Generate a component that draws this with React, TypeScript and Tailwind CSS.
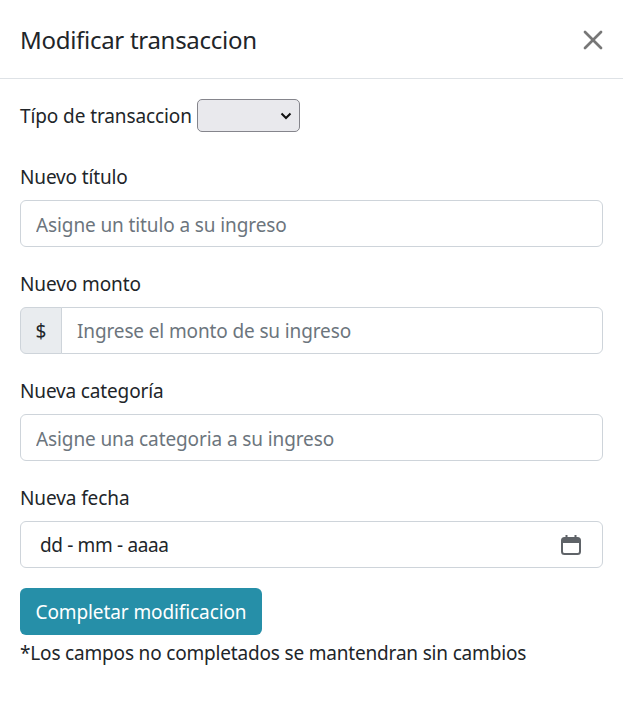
import { X } from "lucide-react";

const fontStack = "font-['Noto_Sans','Open_Sans',sans-serif]";

function Field({ label, placeholder }: { label: string; placeholder: string }) {
  return (
    <div className="mb-[22px]">
      <label className="mb-2 block h-[30px] text-[19px] leading-[30px] tracking-[-0.15px]">{label}</label>
      <input
        placeholder={placeholder}
        className="h-[47px] w-full rounded-[6px] border border-[#ced4da] bg-white px-[15px] pt-[2px] text-[19px] tracking-[-0.11px] outline-none placeholder:text-[#6c757d]"
      />
    </div>
  );
}

function CalendarIcon() {
  return (
    <svg width="20" height="20" viewBox="0 0 20 20" fill="none" stroke="#5f6368" strokeWidth="2">
      <rect x="1" y="3" width="18" height="16" rx="2.5" />
      <path d="M1 6h18" strokeWidth="4" />
      <path d="M5.5 0v3M14.5 0v3" />
    </svg>
  );
}

export default function App() {
  return (
    <div className={`min-h-[705px] w-full bg-white text-[#212529] ${fontStack}`}>
      <div className="flex h-[79px] items-center justify-between border-b border-[#dee2e6] pr-[14px] pl-5">
        <h5 className="pt-[2px] text-[24px] leading-none tracking-[-0.29px]">Modificar transaccion</h5>
        <X size={32} strokeWidth={2} className="mt-[2px] text-[#777777]" />
      </div>

      <div className="px-5 pt-5">
        <div className="mb-[30px] flex h-[33px] items-center gap-[5px]">
          <span className="pt-[2px] text-[19px] tracking-[-0.1px]">Típo de transaccion</span>
          <div className="flex h-[33px] w-[103px] items-center justify-end rounded-[5px] border border-[#85858c] bg-[#e9e9ed] pr-[7px]">
            <svg width="12" height="8" viewBox="0 0 12 8" fill="none" stroke="#111" strokeWidth="2">
              <path d="M1.5 1.5 6 6l4.5-4.5" />
            </svg>
          </div>
        </div>

        <Field label="Nuevo título" placeholder="Asigne un titulo a su ingreso" />

        <div className="mb-[22px]">
          <label className="mb-2 block h-[30px] text-[19px] leading-[30px] tracking-[-0.1px]">Nuevo monto</label>
          <div className="flex h-[47px] w-full">
            <span className="flex w-[42px] items-center justify-center rounded-l-[6px] border border-[#ced4da] bg-[#e9ecef] pt-[2px] text-[19px]">
              $
            </span>
            <input
              placeholder="Ingrese el monto de su ingreso"
              className="-ml-px min-w-0 flex-1 rounded-r-[6px] border border-[#ced4da] bg-white px-[15px] pt-[2px] text-[19px] tracking-[-0.13px] outline-none placeholder:text-[#6c757d]"
            />
          </div>
        </div>

        <Field label="Nueva categoría" placeholder="Asigne una categoria a su ingreso" />

        <div className="mb-5">
          <label className="mb-2 block h-[30px] text-[19px] leading-[30px] tracking-[-0.1px]">Nueva fecha</label>
          <div className="flex h-[47px] w-full items-center justify-between rounded-[6px] border border-[#ced4da] bg-white pr-[21px] pl-[19px]">
            <span className="pt-[2px] text-[19px] tracking-[-0.35px]">dd - mm - aaaa</span>
            <CalendarIcon />
          </div>
        </div>

        <button className="h-[47px] w-[242px] rounded-[6px] bg-[#268fa8] pt-[1px] text-[19px] tracking-[-0.1px] text-white">
          Completar modificacion
        </button>
        <p className="text-[19px] leading-[36px] tracking-[-0.18px]">*Los campos no completados se mantendran sin cambios</p>
      </div>
    </div>
  );
}
